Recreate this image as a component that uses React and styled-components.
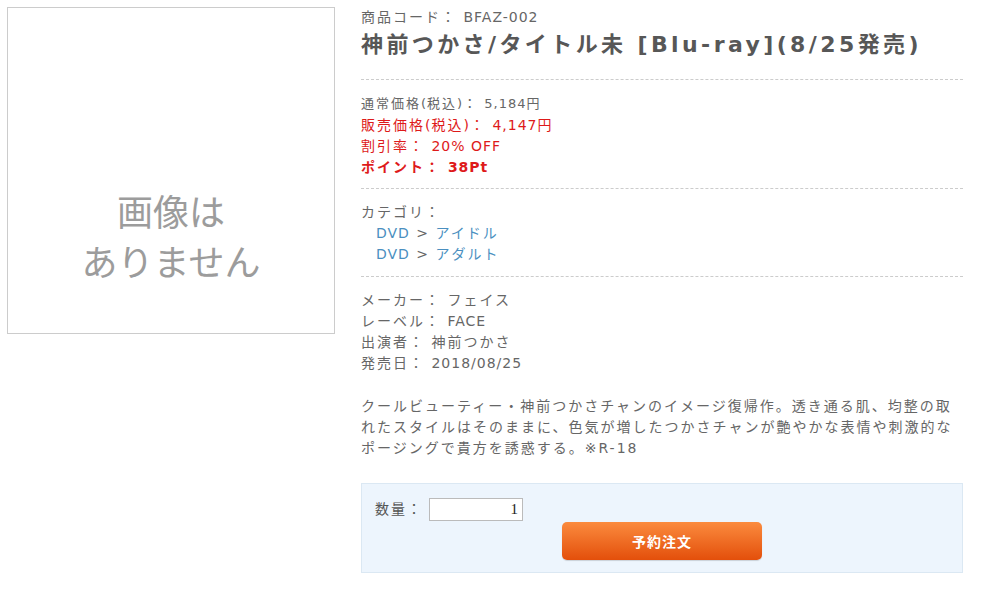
import React from 'react';
import styled, { createGlobalStyle } from 'styled-components';

const Global = createGlobalStyle`
  body {
    margin: 0;
    background: #fff;
    font-family: "DejaVu Sans", "Noto Sans CJK JP", sans-serif;
    color: #666;
  }
`;

const Page = styled.div`
  display: flex;
  align-items: flex-start;
  gap: 26px;
  padding: 7px;
`;

const ImageBox = styled.div`
  width: 328px;
  height: 327px;
  flex-shrink: 0;
  border: 1px solid #ccc;
  display: flex;
  flex-direction: column;
  justify-content: center;
  align-items: center;
  padding-top: 129px;
  box-sizing: border-box;
  color: #9c9c9c;
  font-family: "Noto Sans CJK JP", sans-serif;
  font-size: 36px;
  line-height: 50px;
`;

const Detail = styled.div`
  width: 602px;
  font-size: 14px;
  line-height: 21px;
  letter-spacing: 2px;
`;

// latin values sit a bit tighter than the japanese labels
const Num = styled.span`
  letter-spacing: 1px;
`;

const Title = styled.h1`
  margin: 3px 0 0;
  font-size: 22px;
  line-height: 28px;
  font-weight: bold;
  color: #575757;
  letter-spacing: 3.4px;
`;

const Section = styled.div`
  border-top: 1px dashed #ccc;
  padding: ${p => p.pad || '13px 0 11px'};
  margin-top: ${p => p.top || '0'};
`;

const Line = styled.div`
  font-size: ${p => p.small ? '13px' : '14px'};
  color: ${p => p.red ? '#de1a1a' : '#666'};
  font-weight: ${p => p.bold ? 'bold' : 'normal'};
  line-height: ${p => p.small ? '22px' : '21px'};
`;

const Cat = styled.div`
  padding-left: 15px;
  color: #666;
`;

const Link = styled.a`
  color: #4a8fc0;
  text-decoration: none;
  cursor: pointer;
`;

const Desc = styled.p`
  margin: 22px 0 0;
  line-height: 21px;
`;

const BuyBox = styled.div`
  margin-top: 24px;
  border: 1px solid #dbe8f3;
  background: #edf5fd;
  height: 90px;
  box-sizing: border-box;
  padding: 14px 13px 0;
`;

const QtyRow = styled.div`
  display: flex;
  align-items: center;
  gap: 6px;
`;

const QtyLabel = styled.span`
  color: #555;
  font-size: 14px;
`;

const QtyInput = styled.input`
  width: 94px;
  height: 23px;
  box-sizing: border-box;
  border: 1px solid #bbb;
  text-align: right;
  font-family: "Liberation Serif", serif;
  font-size: 15px;
  padding: 0 4px;
  color: #222;
  background: #fff;
`;

const OrderButton = styled.button`
  display: block;
  margin: 1px 0 0 187px;
  width: 200px;
  height: 38px;
  border: none;
  border-radius: 5px;
  background: linear-gradient(#fb8b3e, #e34f0b);
  color: #fff;
  font-family: "Noto Sans CJK JP", sans-serif;
  font-weight: bold;
  font-size: 14px;
  letter-spacing: 1px;
  box-shadow: 0 1px 1px rgba(0, 0, 0, 0.15);
`;

export default function App() {
  return (
    <>
      <Global />
      <Page>
        <ImageBox>
          <div>画像は</div>
          <div>ありません</div>
        </ImageBox>
        <Detail>
          <div>商品コード： <Num>BFAZ-002</Num></div>
          <Title>神前つかさ/タイトル未 [Blu-ray](8/25発売)</Title>
          <Section top="20px" pad="13px 0 10px">
            <Line small>通常価格<Num>(</Num>税込<Num>)</Num>： <Num>5,184</Num>円</Line>
            <Line red>販売価格<Num>(</Num>税込<Num>)</Num>： <Num>4,147</Num>円</Line>
            <Line red>割引率： <Num>20% OFF</Num></Line>
            <Line red bold>ポイント： <Num>38Pt</Num></Line>
          </Section>
          <Section>
            <div>カテゴリ：</div>
            <Cat><Link><Num>DVD</Num></Link> <Num>&gt;</Num> <Link>アイドル</Link></Cat>
            <Cat><Link><Num>DVD</Num></Link> <Num>&gt;</Num> <Link>アダルト</Link></Cat>
          </Section>
          <Section pad="13px 0 0">
            <div>メーカー： フェイス</div>
            <div>レーベル： <Num>FACE</Num></div>
            <div>出演者： 神前つかさ</div>
            <div>発売日： <Num>2018/08/25</Num></div>
            <Desc>クールビューティー・神前つかさチャンのイメージ復帰作。透き通る肌、均整の取れたスタイルはそのままに、色気が増したつかさチャンが艶やかな表情や刺激的なポージングで貴方を誘惑する。※R-18</Desc>
          </Section>
          <BuyBox>
            <QtyRow>
              <QtyLabel>数量：</QtyLabel>
              <QtyInput defaultValue="1" />
            </QtyRow>
            <OrderButton>予約注文</OrderButton>
          </BuyBox>
        </Detail>
      </Page>
    </>
  );
}
